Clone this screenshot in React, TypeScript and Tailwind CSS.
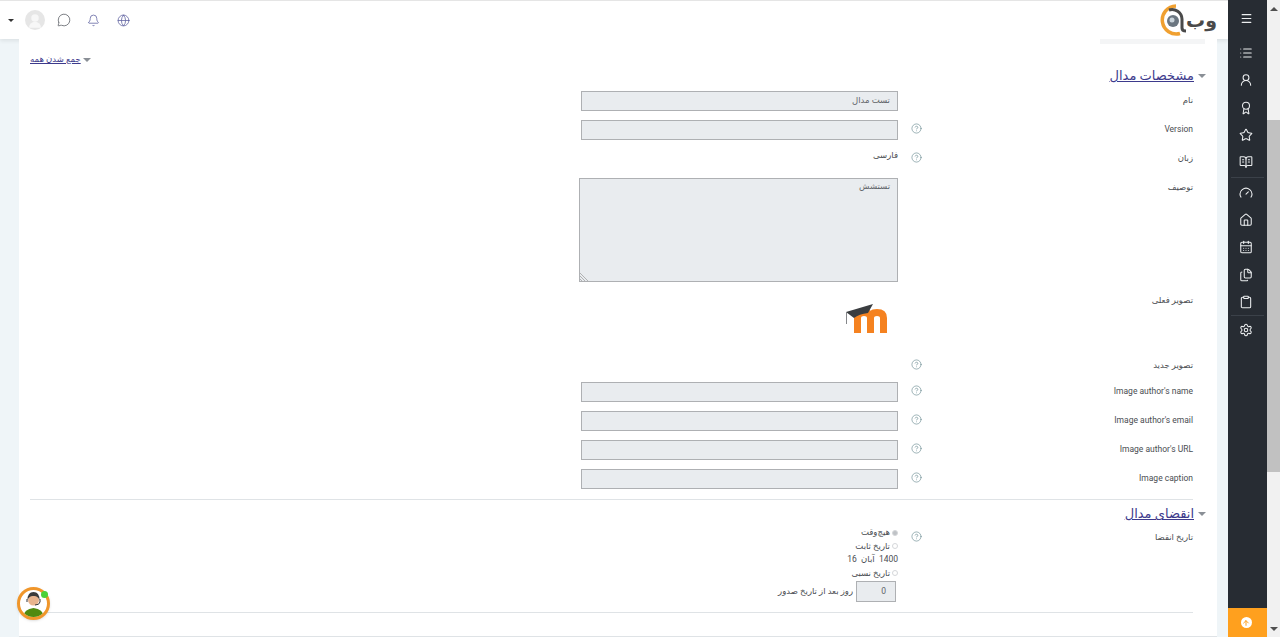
import type { ReactNode } from "react";
import {
  ArrowUp,
  Award,
  Bell,
  BookOpenText,
  CalendarDays,
  CircleHelp,
  Clipboard,
  Files,
  Gauge,
  Globe,
  House,
  List,
  Menu,
  MessageCircle,
  Settings,
  Star,
  UserRound,
} from "lucide-react";

const topNav = [List, UserRound, Award, Star, BookOpenText];
const midNav = [Gauge, House, CalendarDays, Files, Clipboard];

function Caret({ className = "" }: { className?: string }) {
  return <span className={`inline-block h-0 w-0 border-x-[4px] border-t-[4px] border-x-transparent border-t-[#8a8f96] ${className}`} />;
}

function Logo() {
  return (
    <div className="flex items-center" dir="ltr">
      <svg width="27" height="32" viewBox="0 0 27 32">
        <path d="M17 2 A14 14 0 1 0 21 29.500" fill="none" stroke="#f0a030" strokeWidth="3.500" />
        <path d="M10 6 A10 10 0 0 1 23 15 L23 24 Q23 27 27 27" fill="none" stroke="#4a4a4a" strokeWidth="3" />
        <circle cx="14" cy="17" r="6" fill="#6b7680" />
        <circle cx="13" cy="16" r="2.500" fill="#c9d3da" />
      </svg>
      <span className="font-['DejaVu_Sans',sans-serif] text-[19px] leading-none font-bold tracking-[-5px] text-[#4a4a4a]" dir="rtl">
        وب
      </span>
    </div>
  );
}

function Sidebar() {
  return (
    <aside className="flex h-full w-[39px] shrink-0 flex-col bg-[#272c33] text-[#eceef0]">
      <div className="flex h-[39.500px] items-center justify-center pr-[3px] pb-[2px]">
        <Menu size={13} strokeWidth={2.2} />
      </div>
      {topNav.map((Icon, i) => (
        <div key={i} className="flex h-[27.300px] items-center justify-center pr-[3px]">
          <Icon size={14} strokeWidth={1.8} />
        </div>
      ))}
      <div className="mx-[3px] my-[1px] h-px bg-[#3b4149]" />
      {midNav.map((Icon, i) => (
        <div key={i} className="flex h-[27.300px] items-center justify-center pr-[3px]">
          <Icon size={14} strokeWidth={1.8} />
        </div>
      ))}
      <div className="mx-[3px] h-px bg-[#3b4149]" />
      <div className="flex h-[27.300px] items-center justify-center pr-[3px]">
        <Settings size={14} strokeWidth={1.8} />
      </div>
      <div className="mt-auto flex h-[29px] items-center justify-center bg-[#ffa01e] pr-[3px]">
        <span className="flex h-[11px] w-[11px] items-center justify-center rounded-full bg-white">
          <ArrowUp size={8} strokeWidth={3} className="text-[#ffa01e]" />
        </span>
      </div>
    </aside>
  );
}

function Scrollbar() {
  return (
    <div className="flex h-full w-[13px] shrink-0 flex-col items-center bg-[#f1f1f1]">
      <div className="flex h-[17px] items-center justify-center">
        <span className="h-0 w-0 border-x-[4px] border-b-[4px] border-x-transparent border-b-[#505050]" />
      </div>
      <div className="mt-[103px] h-[352px] w-full bg-[#c1c1c1]" />
      <div className="mt-auto flex h-[17px] items-center justify-center">
        <span className="h-0 w-0 border-x-[4px] border-t-[4px] border-x-transparent border-t-[#505050]" />
      </div>
    </div>
  );
}

function Header() {
  return (
    <header className="flex h-[39px] shrink-0 items-center justify-between border-t border-[#e5e5e5] bg-white pr-[11px] pl-[8px] shadow-[0_2px_4px_rgba(0,0,0,0.08)]" dir="ltr">
      <div className="flex items-center text-[#5c5f9e]">
        <span className="h-0 w-0 border-x-[3px] border-t-[3px] border-x-transparent border-t-[#333]" />
        <span className="ml-[11px] flex h-[20px] w-[20px] items-end justify-center overflow-hidden rounded-full bg-[#e6e6e6]">
          <UserRound size={18} strokeWidth={0} fill="#f7f7f7" />
        </span>
        <MessageCircle size={14} strokeWidth={1.3} className="ml-[12px] text-[#55585f]" />
        <Bell size={13} strokeWidth={1.4} className="ml-[16px]" />
        <Globe size={13} strokeWidth={1.4} className="ml-[17px]" />
      </div>
      <Logo />
    </header>
  );
}

function Help() {
  return <CircleHelp size={11} strokeWidth={1.3} className="text-[#5f8288]" />;
}

function Row({ label, help, children, className = "" }: { label: string; help?: boolean; children?: ReactNode; className?: string }) {
  return (
    <div className={`flex ${className}`}>
      <div className="w-[263px] shrink-0 pt-[3px] text-[8.500px] leading-[13px] text-[#4a4d52]">{label}</div>
      <div className="flex w-[32px] shrink-0 justify-start pt-[3px] pr-[8px]">{help && <Help />}</div>
      <div className="min-w-0">{children}</div>
    </div>
  );
}

function TextInput({ value = "" }: { value?: string }) {
  return (
    <div className="h-[20px] w-[317px] border border-[#aeb0b3] bg-[#e9ecef] px-[7px] text-[8.500px] leading-[17px] text-[#5f6368]">
      {value}
    </div>
  );
}

function SectionTitle({ children }: { children: ReactNode }) {
  return (
    <div className="-mr-[13px] flex items-center gap-[4px] pt-[1px]">
      <Caret />
      <span className="text-[13px] leading-[18px] text-[#3d3a8c] underline">{children}</span>
    </div>
  );
}

function Radio({ checked, label }: { checked?: boolean; label: string }) {
  return (
    <div className="flex h-[13.500px] items-center gap-[2px] text-[8.500px] text-[#4a4d52]">
      <span className={`h-[6px] w-[6px] rounded-full border border-[#d5d7da] ${checked ? "bg-[#bfc2c6]" : "bg-white"}`} />
      {label}
    </div>
  );
}

function MoodleLogo() {
  return (
    <svg width="44" height="30" viewBox="0 0 44 30">
      <path d="M12.500 29 V14 Q12.500 8.500 19 8.500 Q25.500 8.500 25.500 14 V29 M25.500 14 Q25.500 8.500 32 8.500 Q38.500 8.500 38.500 14 V29" fill="none" stroke="#f58220" strokeWidth="7" />
      <path d="M1 8 L28 0 L23 9 Q14 10 9 14 Z" fill="#3a3d40" />
      <path d="M1.500 8 V20" stroke="#85878a" strokeWidth="1" />
    </svg>
  );
}

function AgentAvatar() {
  return (
    <div className="absolute top-[587px] left-[17px] h-[33px] w-[33px] rounded-full border-[3px] border-[#f0962a] bg-white shadow-sm">
      <svg width="27" height="27" viewBox="0 0 27 27" className="overflow-hidden rounded-full">
        <path d="M3 27 Q4 19 13.500 18 Q23 19 24 27 Z" fill="#4f8a10" />
        <circle cx="13.500" cy="10" r="5.500" fill="#e8b48e" />
        <path d="M7.500 10 Q7.500 2 13.500 2 Q19.500 2 19.500 10 Q17.500 5.500 13.500 6 Q9.500 5.500 7.500 10 Z" fill="#3b3b3b" />
        <path d="M7 12 V9 M20 12 V9 M20 12 Q19.500 15 15 15" stroke="#333" strokeWidth="1" fill="none" />
      </svg>
      <span className="absolute top-[1px] right-[-1px] h-[7px] w-[7px] rounded-full bg-[#4cd137]" />
    </div>
  );
}

export default function App() {
  return (
    <div className="relative flex h-[637px] w-[1280px] overflow-hidden bg-[#eff5f8] font-['Roboto','DejaVu_Sans',sans-serif]" dir="ltr">
      <div className="flex h-full min-w-0 flex-1 flex-col">
        <Header />
        <main className="mr-[11px] ml-[19px] flex-1 overflow-hidden border-b border-[#dfe3e6] bg-white pr-[24px] pl-[11px]" dir="rtl">
          <div className="-mr-[12px] h-[5px] w-[105px] bg-[#f4f5f6]" />
          <div className="flex h-[22px] items-end justify-end">
            <div className="flex items-center gap-[2px] text-[8.500px] leading-[13px] text-[#3d3a8c] underline">
              <Caret />
              جمع شدن همه
            </div>
          </div>
          <div className="mb-[6px] h-[19px]">
            <SectionTitle>مشخصات مدال</SectionTitle>
          </div>
          <Row label="نام" className="mb-[9px]">
            <TextInput value="تست مدال" />
          </Row>
          <Row label="Version" help className="mb-[9px]">
            <TextInput />
          </Row>
          <Row label="زبان" help className="mb-[9px] h-[20px]">
            <div className="text-[8.500px] leading-[13px] text-[#4a4d52]">فارسی</div>
          </Row>
          <Row label="توصیف" className="mb-[9px]">
            <div className="relative h-[104px] w-[319px] border border-[#aeb0b3] bg-[#e9ecef] px-[7px] py-[1px] text-[8.500px] leading-[13px] text-[#5f6368]">
              تستشش
              <svg width="9" height="9" viewBox="0 0 9 9" className="absolute bottom-0 left-0">
                <path d="M0 1 L8 9 M0 4 L5 9 M0 7 L2 9" stroke="#9a9a9a" strokeWidth="0.7" />
              </svg>
            </div>
          </Row>
          <Row label="تصویر فعلی" className="h-[64px]">
            <div className="flex h-[64px] w-[63px] items-start justify-start pt-[13px] pr-[9px]">
              <MoodleLogo />
            </div>
          </Row>
          <Row label="تصویر جدید" help className="mb-[9px] h-[18px] pt-[1px]" />
          <Row label="Image author's name" help className="mb-[9px]">
            <TextInput />
          </Row>
          <Row label="Image author's email" help className="mb-[9px]">
            <TextInput />
          </Row>
          <Row label="Image author's URL" help className="mb-[9px]">
            <TextInput />
          </Row>
          <Row label="Image caption" help>
            <TextInput />
          </Row>
          <hr className="mt-[10px] border-[#dfe3e6]" />
          <div className="mt-[4px] h-[20px]">
            <SectionTitle>انقضای مدال</SectionTitle>
          </div>
          <Row label="تاریخ انقضا" help className="mt-[4px] h-[75px]">
            <div className="-mt-[2px]">
              <Radio checked label="هیچ‌وقت" />
              <Radio label="تاریخ ثابت" />
              <div className="h-[13.500px] text-[8.500px] leading-[13.500px] text-[#4a4d52]">1400&nbsp; آبان&nbsp; 16</div>
              <Radio label="تاریخ نسبی" />
              <div className="mt-[1px] flex items-center gap-[3px] pr-[2px] text-[8.500px] text-[#4a4d52]">
                <div className="h-[21px] w-[40px] border border-[#aeb0b3] bg-[#e9ecef] px-[9px] text-[8.500px] leading-[19px] text-[#5f6368]">0</div>
                روز بعد از تاریخ صدور
              </div>
            </div>
          </Row>
          <hr className="mt-[9px] border-[#dfe3e6]" />
        </main>
      </div>
      <Sidebar />
      <Scrollbar />
      <AgentAvatar />
    </div>
  );
}
